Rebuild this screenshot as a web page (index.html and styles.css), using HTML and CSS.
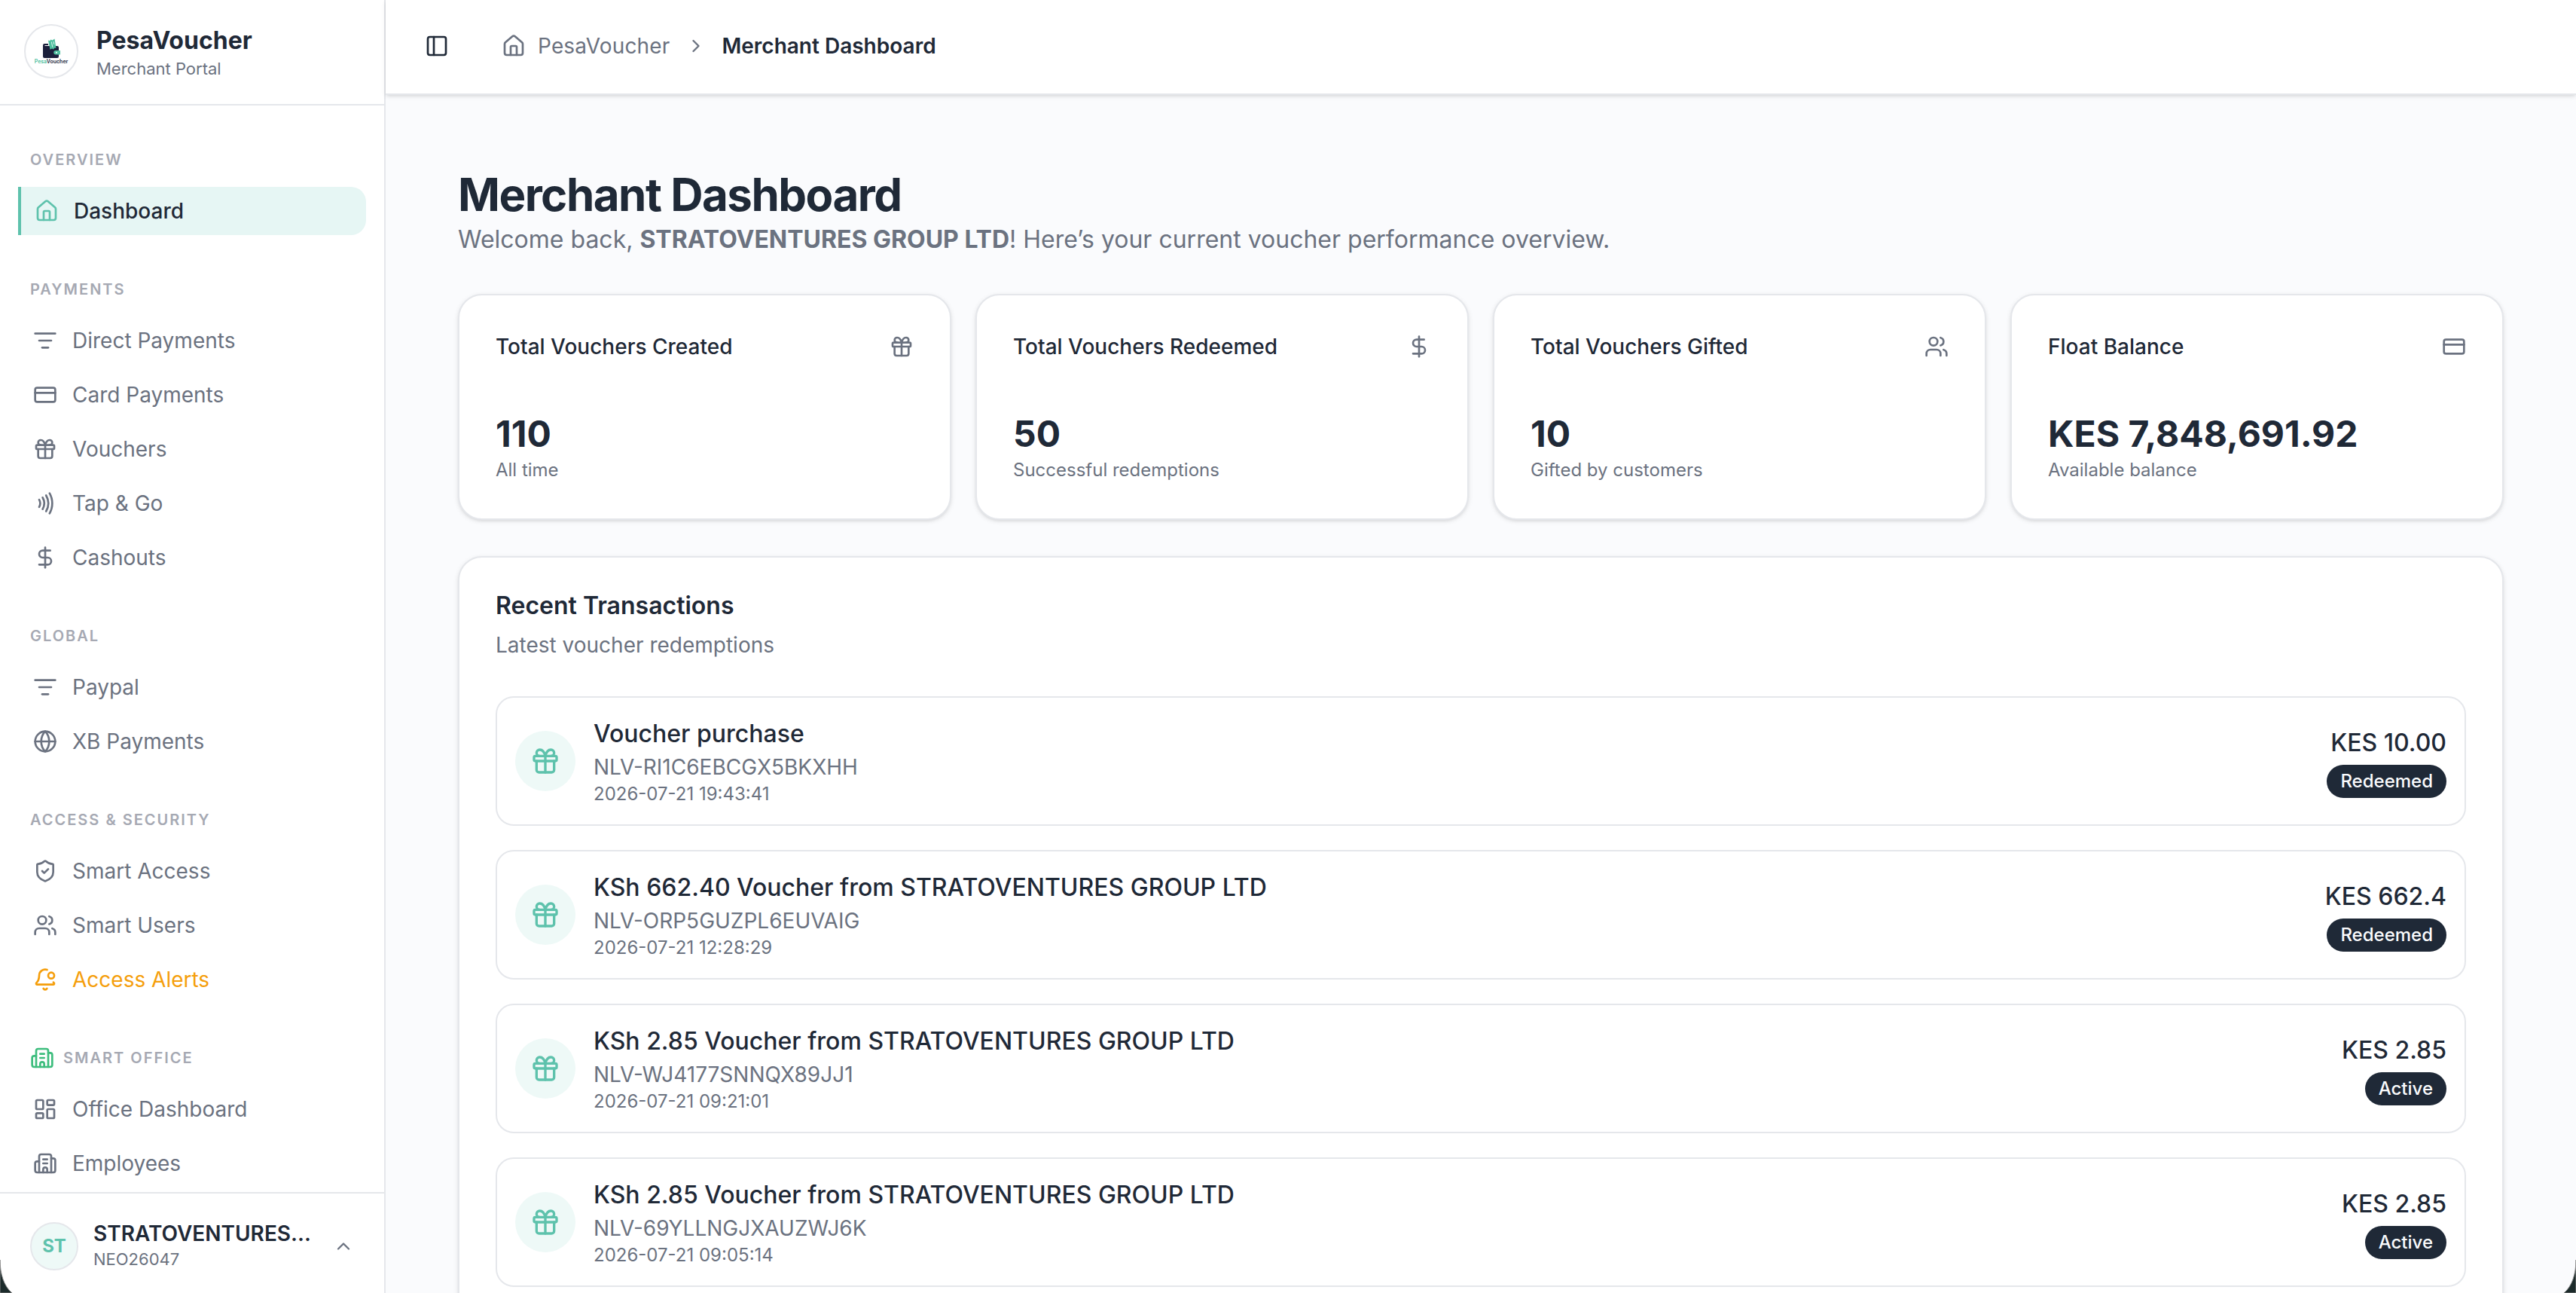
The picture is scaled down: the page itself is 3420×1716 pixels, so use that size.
FILE: index.html
```html
<!DOCTYPE html>
<html lang="en">
<head>
    <meta charset="UTF-8">
    <meta name="viewport" content="width=device-width, initial-scale=1.0">
    <title>Merchant Dashboard</title>
    <link rel="stylesheet" href="styles.css">
</head>
<body>
    <svg class="sprite" xmlns="http://www.w3.org/2000/svg">
        <symbol id="house" viewBox="0 0 24 24">
            <path d="M15 21v-8a1 1 0 0 0-1-1h-4a1 1 0 0 0-1 1v8"/>
            <path d="M3 10a2 2 0 0 1 .709-1.528l7-6a2 2 0 0 1 2.582 0l7 6A2 2 0 0 1 21 10v9a2 2 0 0 1-2 2H5a2 2 0 0 1-2-2z"/>
        </symbol>
        <symbol id="filter" viewBox="0 0 24 24">
            <path d="M2 5h20"/><path d="M6 12h12"/><path d="M9 19h6"/>
        </symbol>
        <symbol id="card" viewBox="0 0 24 24">
            <rect width="20" height="14" x="2" y="5" rx="2"/><path d="M2 10h20"/>
        </symbol>
        <symbol id="gift" viewBox="0 0 24 24">
            <rect x="3" y="8" width="18" height="4" rx="1"/>
            <path d="M12 8v13"/>
            <path d="M19 12v7a2 2 0 0 1-2 2H7a2 2 0 0 1-2-2v-7"/>
            <path d="M7.5 8a2.5 2.5 0 0 1 0-5A4.8 8 0 0 1 12 8a4.8 8 0 0 1 4.5-5 2.5 2.5 0 0 1 0 5"/>
        </symbol>
        <symbol id="nfc" viewBox="0 0 24 24">
            <path d="M6 8.32a7.43 7.43 0 0 1 0 7.36"/>
            <path d="M9.46 6.21a11.76 11.76 0 0 1 0 11.58"/>
            <path d="M12.91 4.1a15.91 15.91 0 0 1 .01 15.8"/>
            <path d="M16.37 2a20.16 20.16 0 0 1 0 20"/>
        </symbol>
        <symbol id="dollar" viewBox="0 0 24 24">
            <path d="M12 2v20"/>
            <path d="M17 5H9.5a3.5 3.5 0 0 0 0 7h5a3.5 3.5 0 0 1 0 7H6"/>
        </symbol>
        <symbol id="globe" viewBox="0 0 24 24">
            <circle cx="12" cy="12" r="10"/>
            <path d="M12 2a14.5 14.5 0 0 0 0 20 14.5 14.5 0 0 0 0-20"/>
            <path d="M2 12h20"/>
        </symbol>
        <symbol id="shield" viewBox="0 0 24 24">
            <path d="M20 13c0 5-3.5 7.5-7.66 8.95a1 1 0 0 1-.67-.01C7.5 20.5 4 18 4 13V6a1 1 0 0 1 1-1c2 0 4.5-1.2 6.24-2.72a1.17 1.17 0 0 1 1.52 0C14.51 3.81 17 5 19 5a1 1 0 0 1 1 1z"/>
            <path d="m9 12 2 2 4-4"/>
        </symbol>
        <symbol id="users" viewBox="0 0 24 24">
            <path d="M16 21v-2a4 4 0 0 0-4-4H6a4 4 0 0 0-4 4v2"/>
            <path d="M16 3.128a4 4 0 0 1 0 7.744"/>
            <path d="M22 21v-2a4 4 0 0 0-3-3.87"/>
            <circle cx="9" cy="7" r="4"/>
        </symbol>
        <symbol id="bell" viewBox="0 0 24 24">
            <path d="M10.268 21a2 2 0 0 0 3.464 0"/>
            <path d="M13.916 2.314A6 6 0 0 0 6 8c0 4.499-1.411 5.956-2.74 7.327A1 1 0 0 0 4 17h16a1 1 0 0 0 .74-1.673 9 9 0 0 1-.585-.665"/>
            <circle cx="18" cy="8" r="3"/>
        </symbol>
        <symbol id="building" viewBox="0 0 24 24">
            <path d="M10 12h4"/><path d="M10 8h4"/>
            <path d="M14 21v-3a2 2 0 0 0-4 0v3"/>
            <path d="M6 10H4a2 2 0 0 0-2 2v7a2 2 0 0 0 2 2h16a2 2 0 0 0 2-2V9a2 2 0 0 0-2-2h-2"/>
            <path d="M6 21V5a2 2 0 0 1 2-2h8a2 2 0 0 1 2 2v16"/>
        </symbol>
        <symbol id="grid" viewBox="0 0 24 24">
            <rect width="7" height="9" x="3" y="3" rx="1"/>
            <rect width="7" height="5" x="14" y="3" rx="1"/>
            <rect width="7" height="9" x="14" y="12" rx="1"/>
            <rect width="7" height="5" x="3" y="16" rx="1"/>
        </symbol>
        <symbol id="panel" viewBox="0 0 24 24">
            <rect width="18" height="18" x="3" y="3" rx="2"/><path d="M9 3v18"/>
        </symbol>
        <symbol id="chevron-right" viewBox="0 0 24 24"><path d="m9 18 6-6-6-6"/></symbol>
        <symbol id="chevron-up" viewBox="0 0 24 24"><path d="m18 15-6-6-6 6"/></symbol>
    </svg>

    <div class="app">
        <aside class="sidebar">
            <div class="brand">
                <div class="brand-logo">
                    <svg class="brand-mark" viewBox="0 0 24 27">
                        <path d="M1 9a2 2 0 0 1 2-2h5v2H3.500v1H20a2 2 0 0 1 2 2v12a2 2 0 0 1-2 2H3a2 2 0 0 1-2-2z" fill="#1b1f3b"/>
                        <path d="M8 2.500l2 .8 1.500-1.800 2 1L16.500 0.500 18.500 13l-2-.5-1.500 2-2-1-2.500 1.200z" fill="#4fbf9f"/>
                        <path d="M12.300 4.500l1.500 7M15 4l.8 4" stroke="#fff" stroke-width="0.800" fill="none"/>
                        <path d="M18 16h6v5.500h-6a2.750 2.750 0 0 1 0-5.500z" fill="#4fbf9f"/>
                        <circle cx="19" cy="18.750" r="1" fill="#fff"/>
                    </svg>
                    <span class="brand-caption"><i>Pesa</i>Voucher</span>
                </div>
                <div class="brand-text">
                    <div class="brand-name">PesaVoucher</div>
                    <div class="brand-sub">Merchant Portal</div>
                </div>
            </div>

            <nav class="nav">
                <div class="nav-group">
                    <div class="nav-label">Overview</div>
                    <a class="nav-item active"><svg class="icon"><use href="#house"/></svg><span>Dashboard</span></a>
                </div>
                <div class="nav-group">
                    <div class="nav-label">Payments</div>
                    <a class="nav-item"><svg class="icon"><use href="#filter"/></svg><span>Direct Payments</span></a>
                    <a class="nav-item"><svg class="icon"><use href="#card"/></svg><span>Card Payments</span></a>
                    <a class="nav-item"><svg class="icon"><use href="#gift"/></svg><span>Vouchers</span></a>
                    <a class="nav-item"><svg class="icon"><use href="#nfc"/></svg><span>Tap &amp; Go</span></a>
                    <a class="nav-item"><svg class="icon"><use href="#dollar"/></svg><span>Cashouts</span></a>
                </div>
                <div class="nav-group">
                    <div class="nav-label">Global</div>
                    <a class="nav-item"><svg class="icon"><use href="#filter"/></svg><span>Paypal</span></a>
                    <a class="nav-item"><svg class="icon"><use href="#globe"/></svg><span>XB Payments</span></a>
                </div>
                <div class="nav-group">
                    <div class="nav-label">Access &amp; Security</div>
                    <a class="nav-item"><svg class="icon"><use href="#shield"/></svg><span>Smart Access</span></a>
                    <a class="nav-item"><svg class="icon"><use href="#users"/></svg><span>Smart Users</span></a>
                    <a class="nav-item alert"><svg class="icon"><use href="#bell"/></svg><span>Access Alerts</span></a>
                </div>
                <div class="nav-group">
                    <div class="nav-label"><svg class="icon office"><use href="#building"/></svg>Smart Office</div>
                    <a class="nav-item"><svg class="icon"><use href="#grid"/></svg><span>Office Dashboard</span></a>
                    <a class="nav-item"><svg class="icon"><use href="#building"/></svg><span>Employees</span></a>
                </div>
            </nav>

            <div class="account">
                <div class="avatar">ST</div>
                <div class="account-text">
                    <div class="account-name">STRATOVENTURES...</div>
                    <div class="account-id">NEO26047</div>
                </div>
                <svg class="icon chevron"><use href="#chevron-up"/></svg>
            </div>
        </aside>

        <main class="main">
            <header class="topbar">
                <svg class="icon toggle"><use href="#panel"/></svg>
                <div class="breadcrumb">
                    <svg class="icon"><use href="#house"/></svg>
                    <span class="crumb">PesaVoucher</span>
                    <svg class="icon chevron"><use href="#chevron-right"/></svg>
                    <span class="crumb-current">Merchant Dashboard</span>
                </div>
            </header>

            <div class="content">
                <h1>Merchant Dashboard</h1>
                <p class="welcome">Welcome back, <strong>STRATOVENTURES GROUP LTD</strong>! Here’s your current voucher performance overview.</p>

                <div class="stats">
                    <div class="card stat">
                        <div class="stat-head"><span>Total Vouchers Created</span><svg class="icon"><use href="#gift"/></svg></div>
                        <div class="stat-value">110</div>
                        <div class="stat-note">All time</div>
                    </div>
                    <div class="card stat">
                        <div class="stat-head"><span>Total Vouchers Redeemed</span><svg class="icon"><use href="#dollar"/></svg></div>
                        <div class="stat-value">50</div>
                        <div class="stat-note">Successful redemptions</div>
                    </div>
                    <div class="card stat">
                        <div class="stat-head"><span>Total Vouchers Gifted</span><svg class="icon"><use href="#users"/></svg></div>
                        <div class="stat-value">10</div>
                        <div class="stat-note">Gifted by customers</div>
                    </div>
                    <div class="card stat">
                        <div class="stat-head"><span>Float Balance</span><svg class="icon"><use href="#card"/></svg></div>
                        <div class="stat-value">KES 7,848,691.92</div>
                        <div class="stat-note">Available balance</div>
                    </div>
                </div>

                <div class="card recent">
                    <h2>Recent Transactions</h2>
                    <p class="recent-sub">Latest voucher redemptions</p>

                    <div class="transactions">
                        <div class="transaction">
                            <div class="tx-icon"><svg class="icon"><use href="#gift"/></svg></div>
                            <div class="tx-info">
                                <div class="tx-title">Voucher purchase</div>
                                <div class="tx-code">NLV-RI1C6EBCGX5BKXHH</div>
                                <div class="tx-date">2026-07-21 19:43:41</div>
                            </div>
                            <div class="tx-side">
                                <div class="tx-amount">KES 10.00</div>
                                <span class="badge">Redeemed</span>
                            </div>
                        </div>
                        <div class="transaction">
                            <div class="tx-icon"><svg class="icon"><use href="#gift"/></svg></div>
                            <div class="tx-info">
                                <div class="tx-title">KSh 662.40 Voucher from STRATOVENTURES GROUP LTD</div>
                                <div class="tx-code">NLV-ORP5GUZPL6EUVAIG</div>
                                <div class="tx-date">2026-07-21 12:28:29</div>
                            </div>
                            <div class="tx-side">
                                <div class="tx-amount">KES 662.4</div>
                                <span class="badge">Redeemed</span>
                            </div>
                        </div>
                        <div class="transaction">
                            <div class="tx-icon"><svg class="icon"><use href="#gift"/></svg></div>
                            <div class="tx-info">
                                <div class="tx-title">KSh 2.85 Voucher from STRATOVENTURES GROUP LTD</div>
                                <div class="tx-code">NLV-WJ4177SNNQX89JJ1</div>
                                <div class="tx-date">2026-07-21 09:21:01</div>
                            </div>
                            <div class="tx-side">
                                <div class="tx-amount">KES 2.85</div>
                                <span class="badge">Active</span>
                            </div>
                        </div>
                        <div class="transaction">
                            <div class="tx-icon"><svg class="icon"><use href="#gift"/></svg></div>
                            <div class="tx-info">
                                <div class="tx-title">KSh 2.85 Voucher from STRATOVENTURES GROUP LTD</div>
                                <div class="tx-code">NLV-69YLLNGJXAUZWJ6K</div>
                                <div class="tx-date">2026-07-21 09:05:14</div>
                            </div>
                            <div class="tx-side">
                                <div class="tx-amount">KES 2.85</div>
                                <span class="badge">Active</span>
                            </div>
                        </div>
                    </div>
                </div>
            </div>
        </main>

        <svg class="corner corner-left" viewBox="0 0 16 44"><path d="M0 0C0 18 5 35 16 44H0z"/></svg>
        <svg class="corner corner-right" viewBox="0 0 16 44"><path d="M0 0C0 18 5 35 16 44H0z"/></svg>
    </div>
</body>
</html>
```
FILE: styles.css
```css
* {
    box-sizing: border-box;
}
body {
    margin: 0;
    font-family: Inter, sans-serif;
    font-size: 28px;
    line-height: 40px;
    color: #1f2937;
    background-color: #fafbfd;
}
.sprite {
    display: none;
}
.app {
    position: relative;
    display: flex;
    height: 100vh;
    overflow: hidden;
}
.icon {
    width: 32px;
    height: 32px;
    flex-shrink: 0;
    fill: none;
    stroke: currentColor;
    stroke-width: 2;
    stroke-linecap: round;
    stroke-linejoin: round;
}

/* sidebar */
.sidebar {
    width: 512px;
    flex-shrink: 0;
    display: flex;
    flex-direction: column;
    background-color: #fff;
    border-right: 2px solid #e5e7eb;
}
.brand {
    display: flex;
    gap: 24px;
    height: 140px;
    flex-shrink: 0;
    padding: 32px;
    border-bottom: 2px solid #e5e7eb;
}
.brand-logo {
    width: 72px;
    height: 72px;
    flex-shrink: 0;
    display: flex;
    flex-direction: column;
    align-items: center;
    padding-top: 17px;
    border: 2px solid #e5e7eb;
    border-radius: 50%;
}
.brand-mark {
    width: 24px;
    height: 27px;
    flex-shrink: 0;
}
.brand-caption {
    font-size: 7px;
    line-height: 8px;
    font-weight: 600;
    color: #1b1f3b;
}
.brand-caption i {
    font-style: normal;
    color: #4fbf9f;
}
.brand-name {
    font-size: 32px;
    line-height: 40px;
    font-weight: 700;
    margin-top: 2px;
}
.brand-sub {
    font-size: 22px;
    line-height: 32px;
    margin-top: 1px;
    color: #6b7280;
}
.nav {
    flex: 1;
    min-height: 0;
    overflow: hidden;
    padding: 52px 24px 0;
}
.nav-group {
    display: flex;
    flex-direction: column;
    align-items: flex-start;
    gap: 8px;
    margin-bottom: 52px;
}
.nav-label {
    display: flex;
    align-items: center;
    gap: 12px;
    height: 40px;
    margin-bottom: 8px;
    padding-left: 16px;
    font-size: 20px;
    font-weight: 600;
    letter-spacing: 2px;
    text-transform: uppercase;
    color: #a6a9b3;
}
.nav-label .office {
    color: #3dbd7d;
}
.nav-item {
    display: flex;
    align-items: center;
    gap: 20px;
    width: 100%;
    height: 64px;
    padding-left: 20px;
    color: #6b7280;
}
.nav-item.active {
    padding-left: 18px;
    border-left: 4px solid #5ec2ac;
    border-radius: 0 20px 20px 0;
    background-color: #e6f6f4;
    color: #1f2937;
    font-weight: 500;
}
.nav-item.active .icon {
    color: #5ec2ac;
}
.nav-item.alert {
    color: #f59e0b;
}
.account {
    display: flex;
    align-items: center;
    height: 134px;
    flex-shrink: 0;
    padding: 8px 40px 0;
    border-top: 2px solid #e5e7eb;
}
.avatar {
    width: 64px;
    height: 64px;
    margin-right: 20px;
    border: 2px solid #e5e7eb;
    border-radius: 50%;
    background-color: #eef9f7;
    color: #5ec2ac;
    font-size: 24px;
    font-weight: 700;
    line-height: 60px;
    text-align: center;
}
.account-text {
    flex: 1;
    padding-bottom: 2px;
}
.account-name {
    font-weight: 600;
    line-height: 36px;
}
.account-id {
    font-size: 22px;
    line-height: 32px;
    color: #6b7280;
}
.account .chevron {
    width: 28px;
    height: 28px;
    color: #6b7280;
}

/* main */
.main {
    flex: 1;
    min-width: 0;
}
.topbar {
    display: flex;
    align-items: center;
    height: 126px;
    padding: 0 52px 2px;
    background-color: #fff;
    border-bottom: 2px solid #e5e7eb;
    box-shadow: 0 2px 6px rgba(0, 0, 0, 0.1), 0 2px 4px -2px rgba(0, 0, 0, 0.1);
}
.breadcrumb {
    display: flex;
    align-items: center;
    margin-left: 70px;
    color: #6b7280;
}
.crumb {
    margin-left: 16px;
    letter-spacing: 0.15px;
}
.breadcrumb .chevron {
    width: 28px;
    height: 28px;
    margin: 0 20px 0 21px;
}
.crumb-current {
    font-weight: 600;
    color: #1f2937;
}
.content {
    padding: 96px;
}
h1 {
    margin: 0;
    font-size: 60px;
    line-height: 72px;
    font-weight: 700;
    letter-spacing: -1.5px;
}
.welcome {
    margin: 0 0 48px;
    font-size: 32px;
    line-height: 48px;
    color: #6b7280;
}
.card {
    background-color: #fff;
    border: 2px solid #e5e7eb;
    border-radius: 32px;
    padding: 48px;
    box-shadow: 0 2px 6px rgba(0, 0, 0, 0.1), 0 2px 4px -2px rgba(0, 0, 0, 0.1);
}
.stats {
    display: grid;
    grid-template-columns: repeat(4, 1fr);
    gap: 32px;
    margin-bottom: 48px;
}
.stat-head {
    display: flex;
    align-items: center;
    justify-content: space-between;
    margin-bottom: 64px;
    font-weight: 500;
}
.stat-head .icon {
    color: #6b7280;
}
.stat-value {
    font-size: 48px;
    line-height: 64px;
    font-weight: 700;
}
.stat-note {
    font-size: 24px;
    line-height: 32px;
    color: #6b7280;
}
h2 {
    margin: 0 0 16px;
    font-size: 32px;
    line-height: 32px;
    font-weight: 600;
}
.recent-sub {
    margin: 0 0 48px;
    color: #6b7280;
}
.transactions {
    display: flex;
    flex-direction: column;
    gap: 32px;
}
.transaction {
    display: flex;
    align-items: center;
    gap: 24px;
    padding: 24px;
    border: 2px solid #e5e7eb;
    border-radius: 24px;
}
.tx-icon {
    display: flex;
    align-items: center;
    justify-content: center;
    width: 80px;
    height: 80px;
    border-radius: 50%;
    background-color: #eef9f7;
    color: #5ec2ac;
}
.tx-icon .icon {
    width: 40px;
    height: 40px;
}
.tx-info {
    flex: 1;
}
.tx-title {
    font-size: 32px;
    line-height: 48px;
    font-weight: 500;
}
.tx-code {
    color: #6b7280;
}
.tx-date {
    font-size: 24px;
    line-height: 32px;
    color: #6b7280;
}
.tx-side {
    display: flex;
    flex-direction: column;
    align-items: flex-end;
    gap: 5px;
    padding-top: 1px;
}
.tx-amount {
    font-size: 32px;
    line-height: 48px;
    font-weight: 500;
}
.badge {
    padding: 6px 18px;
    border-radius: 22px;
    background-color: #1f2937;
    color: #fafbfd;
    font-size: 24px;
    line-height: 32px;
    font-weight: 500;
}

/* dark desktop showing behind the rounded window corners */
.corner {
    position: absolute;
    bottom: 0;
    left: 0;
    width: 16px;
    height: 44px;
    fill: #1c2b2b;
    stroke: #8a8a8a;
    stroke-width: 1;
}
.corner-right {
    left: auto;
    right: 0;
    transform: scaleX(-1);
}
```
